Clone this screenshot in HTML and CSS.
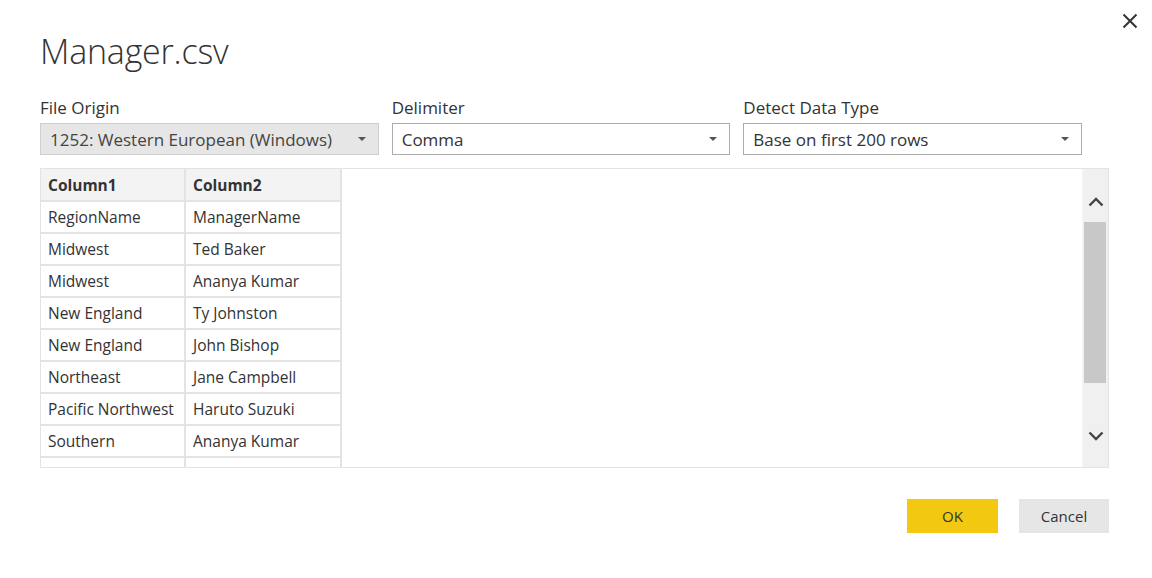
FILE: index.html
```html
<!DOCTYPE html>
<html>
<head>
<meta charset="utf-8">
<link rel="stylesheet" href="styles.css">
</head>
<body>
<div class="dialog">
  <button class="close" aria-label="Close">
    <svg width="16" height="16" viewBox="0 0 16 16"><path d="M1.5 1.5 L14.5 14.5 M14.5 1.5 L1.5 14.5" stroke="#333" stroke-width="2" fill="none"/></svg>
  </button>
  <h1 class="title">Manager.csv</h1>
  <div class="options">
    <div class="field">
      <div class="label">File Origin</div>
      <div class="select disabled"><span>1252: Western European (Windows)</span><i class="caret"></i></div>
    </div>
    <div class="field">
      <div class="label">Delimiter</div>
      <div class="select"><span>Comma</span><i class="caret"></i></div>
    </div>
    <div class="field">
      <div class="label">Detect Data Type</div>
      <div class="select"><span>Base on first 200 rows</span><i class="caret"></i></div>
    </div>
  </div>
  <div class="preview">
    <div class="grid-area">
      <table class="grid">
        <thead>
          <tr><th>Column1</th><th>Column2</th></tr>
        </thead>
        <tbody>
          <tr><td>RegionName</td><td>ManagerName</td></tr>
          <tr><td>Midwest</td><td>Ted Baker</td></tr>
          <tr><td>Midwest</td><td>Ananya Kumar</td></tr>
          <tr><td>New England</td><td>Ty Johnston</td></tr>
          <tr><td>New England</td><td>John Bishop</td></tr>
          <tr><td>Northeast</td><td>Jane Campbell</td></tr>
          <tr><td>Pacific Northwest</td><td>Haruto Suzuki</td></tr>
          <tr><td>Southern</td><td>Ananya Kumar</td></tr>
          <tr class="partial"><td></td><td></td></tr>
        </tbody>
      </table>
    </div>
    <div class="scrollbar">
      <div class="arrow up"><svg width="16" height="10" viewBox="0 0 16 10"><path d="M1.5 8.5 L8 2 L14.5 8.5" stroke="#444" stroke-width="2.4" fill="none"/></svg></div>
      <div class="thumb"></div>
      <div class="arrow down"><svg width="16" height="10" viewBox="0 0 16 10"><path d="M1.5 1.5 L8 8 L14.5 1.5" stroke="#444" stroke-width="2.4" fill="none"/></svg></div>
    </div>
  </div>
  <div class="actions">
    <button class="btn ok">OK</button>
    <button class="btn cancel">Cancel</button>
  </div>
</div>
</body>
</html>
```

FILE: styles.css
```css
* { box-sizing: border-box; }
html, body { margin: 0; padding: 0; background: #fff; }
body {
  font-family: "Open Sans", "Noto Sans", "Liberation Sans", sans-serif;
  color: #333;
  width: 1152px;
  height: 578px;
  overflow: hidden;
}
.dialog {
  position: relative;
  padding: 26px 43px 0 40px;
}
.close {
  position: absolute;
  top: 12px;
  right: 13px;
  width: 18px;
  height: 18px;
  padding: 0;
  border: 0;
  background: transparent;
  display: flex;
  align-items: center;
  justify-content: center;
}
.title {
  margin: 0;
  font-weight: 300;
  font-size: 34px;
  line-height: 50px;
  color: #333;
  letter-spacing: -0.2px;
}
.options {
  display: flex;
  gap: 13px;
  margin-top: 20px;
  width: 1042px;
}
.field { width: 339px; }
.label {
  font-size: 17px;
  line-height: 23px;
  color: #333;
  margin-bottom: 4px;
}
.select {
  height: 32px;
  border: 1px solid #ababab;
  background: #fff;
  display: flex;
  align-items: center;
  padding: 0 12px 0 9px;
  font-size: 17px;
  color: #333;
}
.select span { flex: 1; white-space: nowrap; }
.select.disabled {
  background: #e6e6e6;
  border-color: #cfcfcf;
  color: #444;
}
.caret {
  width: 0;
  height: 0;
  border-left: 4px solid transparent;
  border-right: 4px solid transparent;
  border-top: 4px solid #555;
}
.preview {
  margin-top: 13px;
  height: 300px;
  border: 1px solid #e3e3e3;
  display: flex;
}
.grid-area { flex: 1; overflow: hidden; }
.grid {
  border-collapse: collapse;
  font-size: 15.5px;
  color: #333;
}
.grid th, .grid td {
  height: 32px;
  padding: 0 6px 0 7px;
  text-align: left;
  border: 2px solid #e3e3e3;
  border-top: 0;
  border-left: 0;
  white-space: nowrap;
}
.grid th:first-child, .grid td:first-child { width: 144px; }
.grid th:last-child, .grid td:last-child { width: 156px; }
.grid th {
  background: #f3f3f3;
  font-weight: 700;
  height: 32px;
}
.grid tr.partial td { height: 10px; border-bottom: 0; }
.scrollbar {
  width: 26px;
  background: #f0f0f0;
  display: flex;
  flex-direction: column;
  border-left: 1px solid #f6f6f6;
}
.arrow {
  height: 53px;
  display: flex;
  align-items: center;
  justify-content: center;
}
.arrow.up { height: 53px; padding-top: 12px; }
.thumb {
  height: 161px;
  background: #c8c8c8;
  margin: 0 2px 0 1px;
}
.arrow.down { flex: 1; padding-bottom: 26px; align-items: flex-end; }
.actions {
  display: flex;
  justify-content: flex-end;
  gap: 21px;
  margin-top: 31px;
  width: 1069px;
}
.btn {
  width: 91px;
  height: 34px;
  border: 0;
  font-family: inherit;
  font-size: 15px;
  color: #333;
  padding: 0;
}
.btn.ok { background: #f2c811; }
.btn.cancel { background: #e6e6e6; width: 90px; }
```
